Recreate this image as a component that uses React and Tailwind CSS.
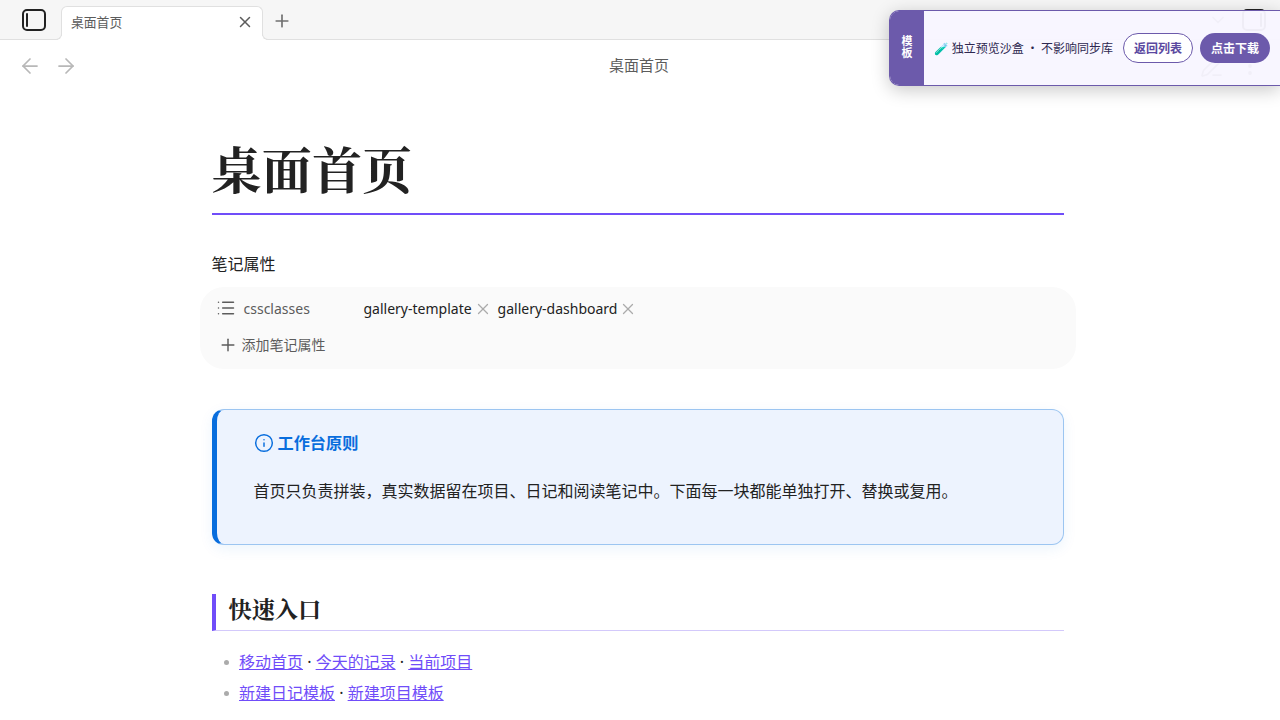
import React from 'react';
import { ArrowLeft, ArrowRight, ChevronDown, Info, List, MoreVertical, PenLine, Plus, X } from 'lucide-react';

const TAGS = ['gallery-template', 'gallery-dashboard'];

const LINKS = [
    ['移动首页', '今天的记录', '当前项目'],
    ['新建日记模板', '新建项目模板'],
];

function SidebarIcon({ flipped }) {
    return (
        <svg width="24" height="22" viewBox="0 0 24 22" fill="none" stroke="currentColor" strokeWidth="2" strokeLinecap="round" className={flipped ? '-scale-x-100' : ''}>
            <rect x="1" y="1" width="22" height="20" rx="4" />
            <path d="M5 5v12" />
        </svg>
    );
}

function TabBar() {
    return (
        <div className="flex h-10 items-end border-b border-[#e0e0e0] bg-[#f6f6f6]">
            <div className="mb-[8px] ml-[22px] w-[39px] text-[#222]">
                <SidebarIcon />
            </div>
            <div className="relative -mb-px flex h-[34px] w-[202px] items-center justify-between rounded-t-md border border-b-0 border-[#e0e0e0] bg-white pr-[9px] pl-[9px]">
                <span className="absolute bottom-0 -left-[6px] h-[6px] w-[6px] rounded-br-md border-r border-b border-[#e0e0e0] bg-[#f6f6f6] shadow-[2px_2px_0_#fff] [clip-path:inset(0_-1px_0_0)]" />
                <span className="absolute -right-[6px] bottom-0 h-[6px] w-[6px] rounded-bl-md border-b border-l border-[#e0e0e0] bg-[#f6f6f6] shadow-[-2px_2px_0_#fff] [clip-path:inset(0_0_0_-1px)]" />
                <span className="pb-[2px] text-[12.8px] leading-none text-[#5c5c5c]">桌面首页</span>
                <X size={18} strokeWidth={2} className="-mr-px mb-[3px] text-[#5c5c5c]" />
            </div>
            <Plus size={20} strokeWidth={2} className="mb-[8px] ml-[9px] text-[#707070]" />
            <div className="mb-[8px] ml-auto flex items-center gap-[14px] pr-[14px] text-[#222]">
                <ChevronDown size={20} className="text-[#5c5c5c]" />
                <SidebarIcon flipped />
            </div>
        </div>
    );
}

function ViewHeader() {
    return (
        <div className="grid h-[52px] grid-cols-3 items-center pr-[18px] pl-[18px]">
            <div className="flex gap-3 text-[#b8b8b8]">
                <ArrowLeft size={24} strokeWidth={1.75} />
                <ArrowRight size={24} strokeWidth={1.75} />
            </div>
            <div className="-ml-[2px] pb-[2px] text-center text-[15px] text-[#5c5c5c]">桌面首页</div>
            <div className="flex items-center justify-end gap-[14px] text-[#5c5c5c]">
                <PenLine size={24} strokeWidth={1.75} />
                <MoreVertical size={24} />
            </div>
        </div>
    );
}

function PreviewBanner() {
    return (
        <div className="absolute top-[10px] right-0 flex h-[76px] w-[391px] overflow-hidden rounded-l-[10px] border border-r-0 border-[#6c5aab] bg-[#f8f6ff]/96 font-['Noto_Sans_CJK_SC',sans-serif] shadow-[0_4px_18px_rgba(0,0,0,0.22)]">
            <div className="flex w-[34px] items-center justify-center bg-[#6c5aab] pb-[4px]">
                <span className="w-[11px] text-[11px] leading-[12px] font-bold text-white">模板</span>
            </div>
            <div className="flex flex-1 items-center pl-[10px] text-[12px] text-[#2e2850]">
                <span className="w-[189px] whitespace-nowrap">🧪 独立预览沙盒 ・ 不影响同步库</span>
                <button className="h-[30px] w-[70px] rounded-full border border-[#6c5aab] bg-white font-bold text-[#5b48a0]">返回列表</button>
                <button className="ml-[7px] h-[30px] w-[70px] rounded-full bg-[#6c5aab] font-bold text-white">点击下载</button>
            </div>
        </div>
    );
}

function Properties() {
    return (
        <section>
            <div className="mt-[37px] -ml-[0.5px] text-[16px] leading-6">笔记属性</div>
            <div className="-mx-[12px] mt-[11px] h-[82px] rounded-[24px] bg-[#fafafa] text-[14px] text-[#5c5c5c]">
                <div className="flex h-[42px] items-center pl-[16px]">
                    <List size={20} strokeWidth={1.75} />
                    <span className="ml-[7.5px] w-[120px]">cssclasses</span>
                    {TAGS.map((tag) => (
                        <span key={tag} className="mr-[7px] flex items-center text-[#222]">
                            {tag}
                            <X size={18} strokeWidth={1.75} className="mt-[2px] ml-[2px] -mr-px text-[#ababab]" />
                        </span>
                    ))}
                </div>
                <div className="flex h-[30px] items-center pl-[18px]">
                    <Plus size={20} strokeWidth={1.75} className="mt-[2px]" />
                    <span className="ml-[3.5px]">添加笔记属性</span>
                </div>
            </div>
        </section>
    );
}

function Callout() {
    return (
        <section className="mt-[40px] h-[136px] rounded-xl border border-l-[5px] border-[#9cc5f1] border-l-[#086ddd] bg-[#edf3fe] pt-[21px] pl-[37px] shadow-[0_4px_14px_rgba(8,109,221,0.08)]">
            <div className="flex h-6 items-center text-[#086ddd]">
                <Info size={20} strokeWidth={1.75} />
                <span className="ml-[3.5px] text-[16.2px] font-bold">工作台原则</span>
            </div>
            <p className="mt-[24px] -ml-[0.5px] text-[16px] leading-6">首页只负责拼装，真实数据留在项目、日记和阅读笔记中。下面每一块都能单独打开、替换或复用。</p>
        </section>
    );
}

function QuickLinks() {
    return (
        <section className="mt-[49px]">
            <h2 className="h-[37px] border-b border-l-4 border-b-[#d3c9fb] border-l-[#704df9] pl-[12.5px] font-['Noto_Serif_CJK_SC','Noto_Serif_CJK_JP',serif] text-[23.2px] leading-[29px] font-bold">快速入口</h2>
            <ul className="mt-[16px]">
                {LINKS.map((row) => (
                    <li key={row[0]} className="flex h-[31px] items-center text-[16px]">
                        <span className="mr-[10px] ml-[12px] h-[5px] w-[5px] rounded-full bg-[#ababab]" />
                        <span className="pb-[2px]">
                            {row.map((label, i) => (
                                <React.Fragment key={label}>
                                    {i > 0 && ' · '}
                                    <a href="#" className="text-[#704df9] underline">{label}</a>
                                </React.Fragment>
                            ))}
                        </span>
                    </li>
                ))}
            </ul>
        </section>
    );
}

function App() {
    return (
        <div className="relative h-[720px] w-[1280px] overflow-hidden bg-white font-['Noto_Sans','Noto_Sans_CJK_SC',sans-serif] text-[#222]">
            <TabBar />
            <ViewHeader />
            <main className="ml-[212px] w-[852px]">
                <h1 className="mt-[43px] h-[80px] border-b-2 border-[#704df9] font-['Noto_Serif_CJK_SC','Noto_Serif_CJK_JP',serif] text-[50.2px] leading-[65px] font-bold">
                    <span className="-ml-[0.5px]">桌面首页</span>
                </h1>
                <Properties />
                <Callout />
                <QuickLinks />
            </main>
            <PreviewBanner />
        </div>
    );
}

export default App;
